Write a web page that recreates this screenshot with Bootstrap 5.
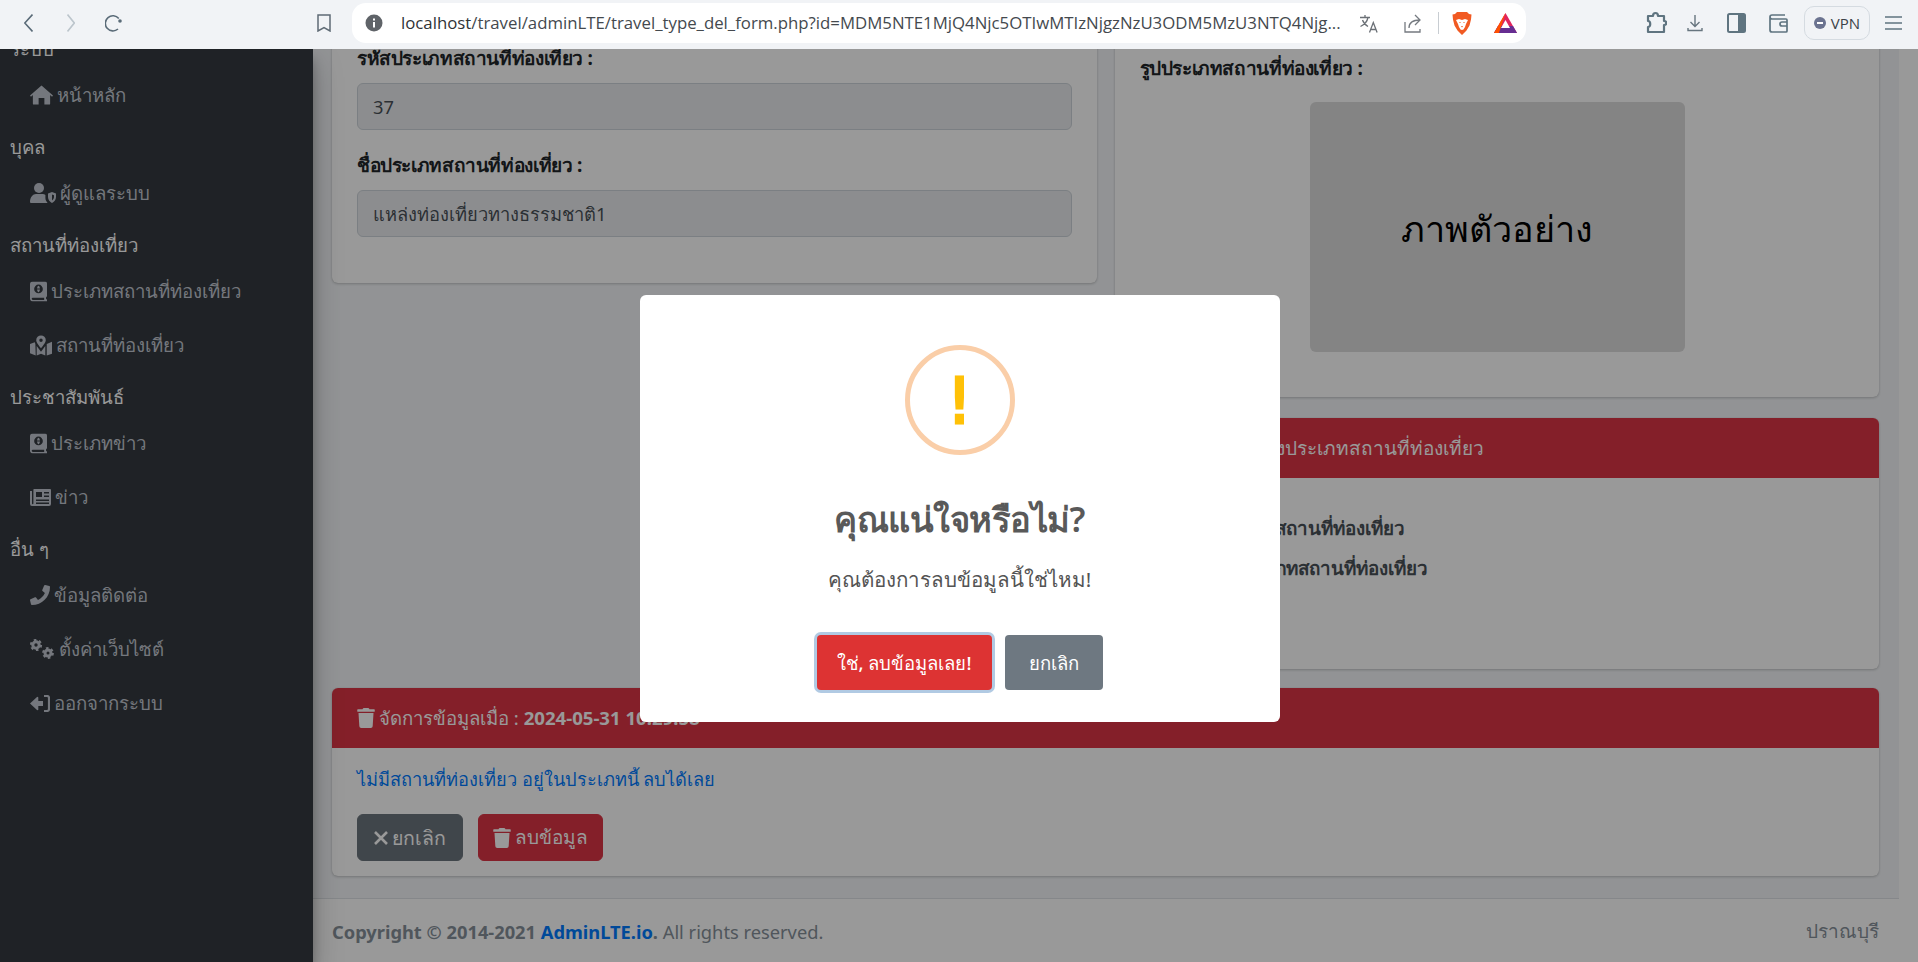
<!DOCTYPE html>
<html lang="th">
<head>
<meta charset="utf-8">
<title>AdminLTE</title>
<link href="https://cdn.jsdelivr.net/npm/bootstrap@5.3.0/dist/css/bootstrap.min.css" rel="stylesheet">
<style>
:root{--thai:"Noto Sans","Open Sans",sans-serif;}
html,body{height:962px;overflow:hidden;}
body{font-family:var(--thai);font-size:18px;background:#fff;color:#212529;}
.chromebar{height:49px;background:#f1f3f6;flex:none;color:#5f6b75;padding:0 0 3px 24px;}
.chromebar svg{flex:none;display:block;}
.gap-fwd{margin-left:34px}.gap-rel{margin-left:30px}.gap-book{margin-left:195px}.gap-pill{margin-left:21px}
.urlpill{width:1174px;height:40px;flex:none;background:#fff;border-radius:14px;padding:0 9px 0 13px;}
.urltext{flex:none;font-family:"Open Sans",sans-serif;font-size:16.8px;color:#44494e;margin-left:18px;width:940px;white-space:nowrap;overflow:hidden;}
.urlhost{color:#2f3336;}
.gap-tr{margin-left:19px}.gap-sh{margin-left:24px}.urlsep{width:1px;height:22px;flex:none;background:#c8cdd2;margin:0 13px 0 16px;}
.gap-bat{margin-left:22px}.gap-ext{margin-left:120px}.gap-dl{margin-left:20px}.gap-side{margin-left:24px}.gap-wal{margin-left:23px}
.vpnpill{margin-left:16px;width:66px;height:34px;border:1px solid #d5dbe1;border-radius:10px;font-family:"Open Sans",sans-serif;font-size:15px;color:#3c4248;gap:5px;}
.gap-menu{margin-left:15px}
.stage{height:913px;}
.sidebar-dark{width:313px;flex:none;background:#343a40;box-shadow:0 14px 28px rgba(0,0,0,.25),0 10px 10px rgba(0,0,0,.22);z-index:1;}
.side-inner{margin-top:-25px;}
.side-head{height:44px;padding:10px 0 0 10px;font-size:18.6px;font-weight:500;line-height:30px;color:#fff;white-space:nowrap;}
.side-link{height:54px;padding-left:30px;font-size:18.6px;font-weight:500;color:#c2c7d0;gap:4px;white-space:nowrap;}
.side-link svg{fill:#c2c7d0;flex:none;}
.page-main{width:1586px;flex:none;}
.page-wrap{background:#f4f6f9;height:849px;padding:0 20px 0 19px;overflow:hidden;}
.strip-r{flex:1;background:#fff;}
.scrolled-row{--bs-gutter-x:18px;--bs-gutter-y:0;margin-top:-30px;}
.panel{background:#fff;border-radius:6px;box-shadow:0 0 1px rgba(0,0,0,.125),0 1px 3px rgba(0,0,0,.2);}
.panel-left{height:264px;padding:24px 25px 0;}
.panel-pic{height:378px;padding:34px 25px 0;margin-bottom:21px;}
.panel-info{height:251px;}
.panel-manage{height:188px;margin-top:19px;}
.lbl{font-weight:700;font-size:19px;line-height:30px;height:30px;margin-bottom:10px;letter-spacing:-.38px;white-space:nowrap;}
.fake-input{height:47px;background:#e9ecef;border:1px solid #ced4da;border-radius:6px;padding:0 15px;margin-bottom:20px;color:#495057;font-size:18.3px;line-height:45px;}
.pic-box{width:375px;height:250px;margin:19px 0 0 170px;padding-top:3px;background:#dcdcdc;border-radius:6px;color:#000;font-size:36px;}
.panel-head{height:60px;background:#dc3545;color:#fff;border-radius:6px 6px 0 0;padding:0 25px;font-size:18.6px;white-space:nowrap;gap:4px;}
.panel-head svg{fill:#fff;}
.head-shift{padding-left:88px;font-size:19px;}
.info-body{padding-top:30px;font-weight:600;color:#495057;font-size:18.8px;line-height:40px;white-space:nowrap;}
.info-a{padding-left:127px;}
.info-b{padding-left:121px;}
.manage-body{padding:15px 25px 0;}
.del-link{color:#007bff;text-decoration:none;font-size:18.2px;line-height:32px;display:block;margin-bottom:19px;}
.act-btn{height:47px;padding:0;gap:4px;--bs-btn-border-radius:6px;color:#fff;display:inline-flex;align-items:center;justify-content:center;}
.act-btn svg{fill:#fff;}
.btn-dark-grey{width:106px;font-size:19.5px;background:#6c757d;border-color:#6c757d;}
.btn-redd{width:125px;font-size:19px;background:#dc3545;border-color:#dc3545;}
.act-row{gap:15px;}
.page-foot{height:64px;background:#fff;border-top:1px solid #dee2e6;padding:2px 20px 0 19px;color:#869099;font-size:18.3px;}
.foot-link{color:#007bff;text-decoration:none;}
.foot-bold{font-weight:700;}
.foot-place{font-size:19px;}
.dim-layer{position:absolute;inset:0;background:rgba(0,0,0,.4);z-index:5;padding-top:246px;}
.alert-box{width:640px;height:427px;background:#fff;border-radius:6px;margin-left:1px;color:#545454;padding-top:50px;}
.warn-ring{width:110px;height:110px;padding-top:3px;border:5px solid #facea8;border-radius:50%;color:#ffc107;font-family:"DejaVu Sans",sans-serif;font-size:62px;line-height:1;-webkit-text-stroke:3px #ffc107;}
.alert-title{font-size:34.5px;font-weight:600;color:#595959;margin:37px 0 0;line-height:54px;letter-spacing:-.5px;}
.alert-text{font-size:20.5px;line-height:30px;margin:18px 0 0;}
.alert-btns{gap:13px;margin-top:41px;}
.alert-yes,.alert-no{height:55px;color:#fff;font-size:18.5px;font-weight:500;border-radius:4px;border:0;}
.alert-yes{width:175px;background:#dd3333;box-shadow:0 0 0 3px rgba(100,150,200,.5);}
.alert-no{width:98px;background:#6e7881;}
</style>
</head>
<body class="d-flex flex-column">
<svg width="0" height="0" class="position-absolute">
  <symbol id="i-trash" viewBox="0 0 448 512"><path d="M432 32H312l-9.4-18.7A24 24 0 0 0 281.1 0H166.8a23.72 23.72 0 0 0-21.4 13.3L136 32H16A16 16 0 0 0 0 48v32a16 16 0 0 0 16 16h416a16 16 0 0 0 16-16V48a16 16 0 0 0-16-16zM53.2 467a48 48 0 0 0 47.9 45h245.8a48 48 0 0 0 47.9-45L416 128H32z"/></symbol>
  <symbol id="i-atlas" viewBox="0 0 18 21"><path fill-rule="evenodd" d="M3 0h13a2 2 0 0 1 2 2v13a2 2 0 0 1-1 1.6v1.9a1 1 0 0 1 1 1V21H3a3 3 0 0 1-3-3V3a3 3 0 0 1 3-3zM3 17a1.2 1.2 0 0 0 0 2.4h12V17zM9 3.2a4.6 4.6 0 1 0 0 9.2 4.6 4.6 0 0 0 0-9.2zM9 4.4c.7 0 1.4 1.4 1.5 2.8h-3C7.600 5.800 8.300 4.400 9 4.400zM7.500 8.400h3c-.1 1.400-.8 2.800-1.500 2.800s-1.400-1.400-1.500-2.800z"/></symbol>
</svg>

<header class="chromebar d-flex align-items-center">
  <svg width="9" height="18" viewBox="0 0 9 18" fill="none" stroke="#5a6b78" stroke-width="1.6"><path d="M8.500 .5L.8 9l7.700 8.500"/></svg>
  <svg class="gap-fwd" width="8" height="18" viewBox="0 0 8 18" fill="none" stroke="#bcc5cc" stroke-width="1.6"><path d="M.5 .5L7.300 9 .5 17.500"/></svg>
  <svg class="gap-rel" width="17" height="18" viewBox="0 0 17 18" fill="none" stroke="#5a6b78" stroke-width="1.6"><path d="M13 15a7.600 7.600 0 1 1 .8-10.500"/><circle cx="15" cy="7" r="1.800" fill="#5a6b78" stroke="none"/></svg>
  <svg class="gap-book" width="14" height="18" viewBox="0 0 14 18" fill="none" stroke="#5f6b75" stroke-width="1.500"><path d="M1 1h12v16l-6-3.500L1 17z"/></svg>
  <div class="urlpill gap-pill d-flex align-items-center">
    <svg width="18" height="18" viewBox="0 0 18 18"><circle cx="9" cy="9" r="8.500" fill="#5f6368"/><rect x="8" y="8" width="2" height="5.500" fill="#fff"/><rect x="8" y="4.500" width="2" height="2" fill="#fff"/></svg>
    <div class="urltext"><span class="urlhost">localhost</span>/travel/adminLTE/travel_type_del_form.php?id=MDM5NTE1MjQ4Njc5OTIwMTIzNjgzNzU3ODM5MzU3NTQ4Njg...</div>
    <svg class="gap-tr" width="19" height="19" viewBox="0 0 19 19" fill="none" stroke="#6b7076" stroke-width="1.300"><path d="M0 3.500h10M5 1v2.500M8 3.500c-.8 4-3.500 7-7.500 9M2.500 6c1 3 3 5 5.500 6.500M9.500 18.500l3.800-10 3.800 10M10.800 15.500h5"/></svg>
    <svg class="gap-sh" width="19" height="19" viewBox="0 0 19 19" fill="none" stroke="#757a80" stroke-width="1.300"><path d="M2 8v10h15v-3M6 14c0-5 3-8 11-8M12 1l5 5-5 5"/></svg>
    <span class="urlsep"></span>
    <svg width="20" height="23" viewBox="0 0 20 23"><path d="M5 0h10l2 2 2.500.5-.5 5-1.500 6-3 5L10 23l-4.500-4.500-3-5-1.500-6-.5-5L3 2z" fill="#f15a22"/><path d="M4 8l3-1 3 1 3-1 3 1-2 4-1 3-1.500 2.500L10 18l-1.500-.5L7 15l-1-3z" fill="#fff"/><path d="M7 10h2l-1 1zM11 10h2l-1 1zM9 14h2l-1 1.500z" fill="#f15a22"/></svg>
    <svg class="gap-bat" width="23" height="20" viewBox="0 0 23 20"><path d="M11.500 0L23 20H0z" fill="#e0245e"/><path d="M0 20l4-7h15l4 7z" fill="#662d91"/><path d="M11.500 7L16 15H7z" fill="#fff"/><path d="M11.500 0L0 20h5z" fill="#ff5000"/></svg>
  </div>
  <svg class="gap-ext" width="21" height="24" viewBox="0 0 21 24" fill="none" stroke="#5f7480" stroke-width="2.200"><path d="M2 5h5c0-4 5-4 5 0h6v5c3 0 3 4 0 4v7H2v-5c3 0 3-6 0-6z" stroke-linejoin="round"/></svg>
  <svg class="gap-dl" width="16" height="18" viewBox="0 0 16 18" fill="none" stroke="#67757f" stroke-width="1.400"><path d="M8 1v11M3.500 8L8 12.500 12.500 8M1 14v2.500h14V14"/></svg>
  <svg class="gap-side" width="19" height="20" viewBox="0 0 19 20"><rect x="1" y="1" width="17" height="18" rx="1.500" fill="none" stroke="#5f7480" stroke-width="2"/><rect x="11" y="1" width="7" height="18" fill="#5f7480"/></svg>
  <svg class="gap-wal" width="19" height="19" viewBox="0 0 19 19" fill="none" stroke="#5f7480" stroke-width="1.700"><path d="M17 5H3a2 2 0 0 1 0-4h13M1 3v13a2 2 0 0 0 2 2h14a1 1 0 0 0 1-1V6a1 1 0 0 0-1-1"/><path d="M18 8h-5a2 2 0 0 0 0 4h5"/></svg>
  <div class="vpnpill d-flex align-items-center justify-content-center">
    <svg width="12" height="12" viewBox="0 0 12 12"><circle cx="6" cy="6" r="6" fill="#6b7390"/><rect x="3" y="5" width="6" height="2" fill="#fff"/></svg>VPN
  </div>
  <svg class="gap-menu" width="17" height="14" viewBox="0 0 17 14" fill="none" stroke="#5f7480" stroke-width="1.500"><path d="M0 1h17M0 7h17M0 13h17"/></svg>
</header>

<div class="stage position-relative overflow-hidden d-flex">
  <aside class="sidebar-dark">
    <div class="side-inner">
      <div class="side-head">ระบบ</div>
      <a class="side-link d-flex align-items-center text-decoration-none">
        <svg width="23" height="20" viewBox="0 0 24 20"><path d="M12 0l12 10.500-1 1.200-2-1.700V19a1 1 0 0 1-1 1h-5v-7H9v7H4a1 1 0 0 1-1-1v-9l-2 1.700-1-1.200z"/></svg>หน้าหลัก</a>
      <div class="side-head">บุคล</div>
      <a class="side-link d-flex align-items-center text-decoration-none">
        <svg width="26" height="20" viewBox="0 0 26 20"><circle cx="9" cy="5" r="5"/><path d="M0 19c0-5 3-8 6-8h6c1.500 0 2.500.4 3.400 1v3c0 2 1 3.500 2.200 5H1a1 1 0 0 1-1-1z"/><path fill-rule="evenodd" d="M22 9l4 1.500V14c0 3-2 5-4 6-2-1-4-3-4-6v-3.500zM22 11.500v6c1-.8 2-2 2-3.500v-1.800z"/></svg>ผู้ดูแลระบบ</a>
      <div class="side-head">สถานที่ท่องเที่ยว</div>
      <a class="side-link d-flex align-items-center text-decoration-none">
        <svg width="17" height="21" viewBox="0 0 18 21"><use href="#i-atlas"/></svg>ประเภทสถานที่ท่องเที่ยว</a>
      <a class="side-link d-flex align-items-center text-decoration-none">
        <svg width="22" height="21" viewBox="0 0 23 21"><path fill-rule="evenodd" d="M11.500 0a5 5 0 0 1 5 5c0 2-2.700 5.500-5 8.500-2.300-3-5-6.500-5-8.500a5 5 0 0 1 5-5zM11.500 3.200a1.800 1.800 0 1 0 0 3.600 1.800 1.800 0 0 0 0-3.600z"/><path d="M0 9l5-2 .6 2 .4 12-6-2.500zM7 11l4.500 6 4.500-6v10l-4.500-2-4.500 2zM17.500 9L23 6.500V19l-5.500 2z"/></svg>สถานที่ท่องเที่ยว</a>
      <div class="side-head">ประชาสัมพันธ์</div>
      <a class="side-link d-flex align-items-center text-decoration-none">
        <svg width="17" height="21" viewBox="0 0 18 21"><use href="#i-atlas"/></svg>ประเภทข่าว</a>
      <a class="side-link d-flex align-items-center text-decoration-none">
        <svg width="21" height="17" viewBox="0 0 21 17"><path fill-rule="evenodd" d="M4 0h16a1 1 0 0 1 1 1v14a2 2 0 0 1-2 2H2a2 2 0 0 1-2-2V2h2v12.500a.7.700 0 0 0 1.400 0V.6A.6.600 0 0 1 4 0zM6 3v5h6V3zM14 3v1.500h5V3zM14 6.500V8h5V6.500zM6 10.500V12h13v-1.500zM6 13.500V15h13v-1.500z"/></svg>ข่าว</a>
      <div class="side-head">อื่น ๆ</div>
      <a class="side-link d-flex align-items-center text-decoration-none">
        <svg width="20" height="20" viewBox="0 0 512 512"><path d="M493.4 24.6l-104-24c-11.3-2.6-22.9 3.300-27.500 13.900l-48 112c-4.200 9.800-1.400 21.300 6.900 28l60.600 49.600c-36 76.700-98.900 140.500-177.200 177.200l-49.600-60.600c-6.800-8.300-18.200-11.100-28-6.900l-112 48C3.900 366.500-2 378.100.6 389.400l24 104C27.100 504.200 36.700 512 48 512c256.100 0 464-207.500 464-464 0-11.200-7.700-20.900-18.600-23.400z"/></svg>ข้อมูลติดต่อ</a>
      <a class="side-link d-flex align-items-center text-decoration-none">
        <svg width="25" height="20" viewBox="0 0 25 20"><circle cx="6" cy="6" r="3.200" fill="none" stroke="#c2c7d0" stroke-width="3"/><circle cx="6" cy="6" r="5" fill="none" stroke="#c2c7d0" stroke-width="2.200" stroke-dasharray="2.500 2.700"/><circle cx="18" cy="14" r="3" fill="none" stroke="#c2c7d0" stroke-width="3"/><circle cx="18" cy="14" r="4.800" fill="none" stroke="#c2c7d0" stroke-width="2.200" stroke-dasharray="2.500 2.500"/></svg>ตั้งค่าเว็บไซต์</a>
      <a class="side-link d-flex align-items-center text-decoration-none">
        <svg width="20" height="17" viewBox="0 0 20 17"><path d="M0 8.500L7 2a.8.800 0 0 1 1.300.6V6H13v5H8.300v3.400A.8.800 0 0 1 7 15z"/><path d="M14 1h3a2 2 0 0 1 2 2v11a2 2 0 0 1-2 2h-3" fill="none" stroke="#c2c7d0" stroke-width="2.200"/></svg>ออกจากระบบ</a>
    </div>
  </aside>

  <main class="page-main d-flex flex-column">
    <div class="page-wrap">
      <div class="row scrolled-row">
        <div class="col-6">
          <div class="panel panel-left">
            <div class="lbl">รหัสประเภทสถานที่ท่องเที่ยว :</div>
            <div class="fake-input">37</div>
            <div class="lbl">ชื่อประเภทสถานที่ท่องเที่ยว :</div>
            <div class="fake-input">แหล่งท่องเที่ยวทางธรรมชาติ1</div>
          </div>
        </div>
        <div class="col-6">
          <div class="panel panel-pic">
            <div class="lbl">รูปประเภทสถานที่ท่องเที่ยว :</div>
            <div class="pic-box d-flex align-items-center justify-content-center">ภาพตัวอย่าง</div>
          </div>
          <div class="panel panel-info">
            <div class="panel-head head-shift d-flex align-items-center">ข้อมูลของประเภทสถานที่ท่องเที่ยว</div>
            <div class="info-body">
              <div class="info-a">รหัสสถานที่ท่องเที่ยว</div>
              <div class="info-b">ประเภทสถานที่ท่องเที่ยว</div>
            </div>
          </div>
        </div>
      </div>
      <div class="panel panel-manage">
        <div class="panel-head d-flex align-items-center">
          <svg width="18" height="20"><use href="#i-trash"/></svg>
          <span>จัดการข้อมูลเมื่อ : <b>2024-05-31 10:29:58</b></span>
        </div>
        <div class="manage-body">
          <a class="del-link">ไม่มีสถานที่ท่องเที่ยว อยู่ในประเภทนี้ ลบได้เลย</a>
          <div class="act-row d-flex">
            <a class="btn act-btn btn-dark-grey"><svg width="14" height="14" viewBox="0 0 14 14"><path d="M1 1l12 12M13 1L1 13" stroke="#fff" stroke-width="2.600" fill="none"/></svg>ยกเลิก</a>
            <a class="btn act-btn btn-redd"><svg width="18" height="20"><use href="#i-trash"/></svg>ลบข้อมูล</a>
          </div>
        </div>
      </div>
    </div>
    <footer class="page-foot d-flex align-items-center justify-content-between">
      <div><span class="foot-bold">Copyright © 2014-2021 <a class="foot-link">AdminLTE.io</a>.</span> All rights reserved.</div>
      <div class="foot-place">ปราณบุรี</div>
    </footer>
  </main>
  <div class="strip-r"></div>

  <div class="dim-layer d-flex justify-content-center align-items-start">
    <div class="alert-box d-flex flex-column align-items-center text-center">
      <div class="warn-ring d-flex align-items-center justify-content-center">!</div>
      <h2 class="alert-title">คุณแน่ใจหรือไม่?</h2>
      <p class="alert-text">คุณต้องการลบข้อมูลนี้ใช่ไหม!</p>
      <div class="alert-btns d-flex">
        <button class="alert-yes btn">ใช่, ลบข้อมูลเลย!</button>
        <button class="alert-no btn">ยกเลิก</button>
      </div>
    </div>
  </div>
</div>
<script src="https://cdn.jsdelivr.net/npm/bootstrap@5.3.0/dist/js/bootstrap.bundle.min.js"></script>
</body>
</html>
